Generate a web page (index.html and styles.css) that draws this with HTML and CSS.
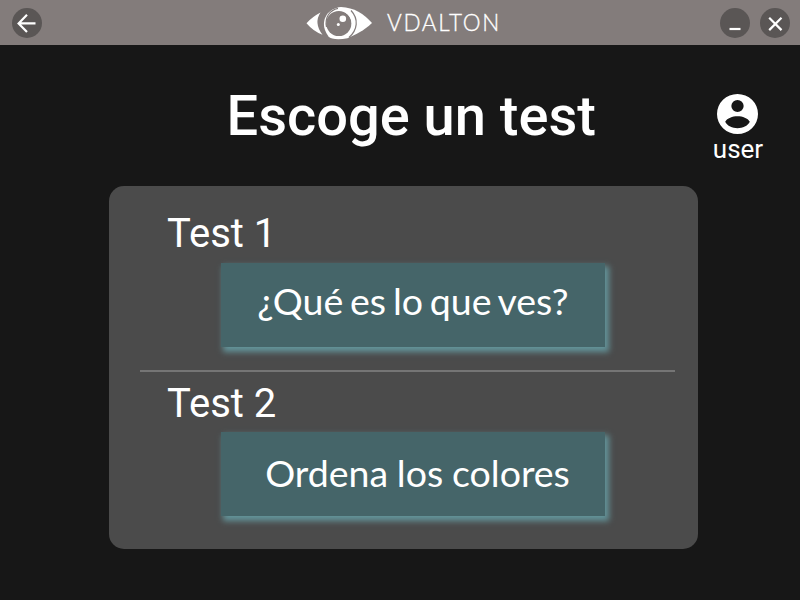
FILE: index.html
```html
<!DOCTYPE html>
<html lang="es">
<head>
<meta charset="utf-8">
<title>VDALTON</title>
<link rel="stylesheet" href="styles.css">
</head>
<body>
<header class="bar">
  <button class="round" aria-label="Volver"><svg width="30" height="30" viewBox="0 0 30 30"><path d="M23.500 15.400H6.700M15 6.800L6.600 15.400L15 24"/></svg></button>
  <div class="brand">
    <svg class="eye" width="66" height="34" viewBox="306 6 66 34">
      <path class="fill" d="M306.500 23.200Q312 17 320.500 12.500Q313.500 23 322.500 34.800Q313 31 306.500 23.200Z"/>
      <path class="fill" d="M324.800 29.500C321.500 19 328 8.500 341 7.100C354 7.500 364 14 372 23C364 30.500 356 34.500 347.500 38.300C339 39.800 331 39.500 328.500 36.500Q326 33 324.800 29.500Z"/>
      <circle class="hole" cx="338.800" cy="23.500" r="12.600"/>
      <path class="thick" d="M346 11.500C355 18 355 28 348 35.500"/>
      <path class="cut" d="M326.500 27C324.500 17 330 10 338 8.300M351 10.500C359 19 357.500 30 349 37.500"/>
      <circle class="fill" cx="342.800" cy="18.800" r="3.300"/>
      <circle class="fill" cx="338.300" cy="24.400" r="1.500"/>
    </svg>
    <span class="name">VDALTON</span>
  </div>
  <div class="controls">
    <button class="round" aria-label="Minimizar"><svg width="30" height="30" viewBox="0 0 30 30"><path d="M9.500 21H20.500"/></svg></button>
    <button class="round" aria-label="Cerrar"><svg width="30" height="30" viewBox="0 0 30 30"><path d="M9.200 9.800L21.500 22.100M21.500 9.800L9.200 22.100"/></svg></button>
  </div>
</header>
<main>
  <div class="top">
    <h1>Escoge un test</h1>
    <div class="user">
      <svg width="41" height="40" viewBox="0 0 40 40" preserveAspectRatio="none"><path fill="#fff" fill-rule="evenodd" d="M20 0a20 20 0 1 0 0 40a20 20 0 1 0 0-40ZM20 6a6 6 0 1 1 0 12a6 6 0 1 1 0-12ZM8 27.800C12 20.400 28 20.400 32 27.800C28 36.300 12 36.300 8 27.800Z"/></svg>
      <span>user</span>
    </div>
  </div>
  <div class="card">
    <section class="test">
      <h2>Test 1</h2>
      <button class="option first">¿Qué es lo que ves?</button>
    </section>
    <hr>
    <section class="test">
      <h2>Test 2</h2>
      <button class="option second">Ordena los colores</button>
    </section>
  </div>
</main>
</body>
</html>
```
FILE: styles.css
```css
* { box-sizing: border-box; }
body {
  margin: 0;
  width: 800px;
  height: 600px;
  overflow: hidden;
  background: #171717;
  color: #fff;
  font-family: Roboto, sans-serif;
}
button { border: 0; padding: 0; color: inherit; }
.bar {
  height: 45px;
  background: #837c7b;
  display: grid;
  grid-template-columns: 294px 1fr 70px;
  padding: 8px 10px 0 12px;
}
.round {
  width: 30px;
  height: 30px;
  border-radius: 50%;
  background: #5a5655;
}
.round svg { display: block; }
.round path { fill: none; stroke: #fff; stroke-width: 2.2; }
.brand { display: flex; height: 30px; align-items: center; }
.eye { display: block; }
.fill { fill: #fff; }
.hole { fill: #837c7b; }
.cut { fill: none; stroke: #837c7b; stroke-width: 1.2; }
.thick { fill: none; stroke: #fff; stroke-width: 2.4; }
.name {
  margin-left: 15px;
  font: 300 22.5px/30px Lato, sans-serif;
  letter-spacing: 1.65px;
  -webkit-text-stroke: 0.3px #fff;
}
.controls { display: flex; justify-content: flex-end; gap: 10px; }
.top {
  display: grid;
  grid-template-columns: 1fr 70px;
  height: 141px;
  padding: 38px 27px 0 226.5px;
}
h1 { margin: 0; font-weight: 500; font-size: 56px; line-height: 66px; white-space: nowrap; }
.user {
  display: flex;
  flex-direction: column;
  align-items: center;
  padding-top: 11px;
}
.user svg { display: block; margin-right: 2px; }
.user span { font-size: 26px; line-height: 31px; }
.card {
  width: 589px;
  height: 363px;
  margin-left: 109px;
  padding: 24px 23px 0 31px;
  border-radius: 15px;
  background: #4b4b4b;
}
h2 {
  margin: 0 0 6px 27px;
  font-weight: 400;
  font-size: 40px;
  line-height: 47px;
}
.option {
  display: block;
  width: 384px;
  height: 84px;
  margin-left: 81px;
  background: #456569;
  font: 400 37.5px/46px Lato, sans-serif;
  box-shadow: 3px 4px 6px 1px #63949a;
}
.first { padding-bottom: 8px; word-spacing: -2.8px; }
.second { padding: 0 0 3px 9px; word-spacing: -0.8px; }
hr {
  height: 2px;
  margin: 23px 0 8px;
  border: 0;
  background: #757575;
}
.test:last-child h2 { margin-bottom: 5px; }
```
